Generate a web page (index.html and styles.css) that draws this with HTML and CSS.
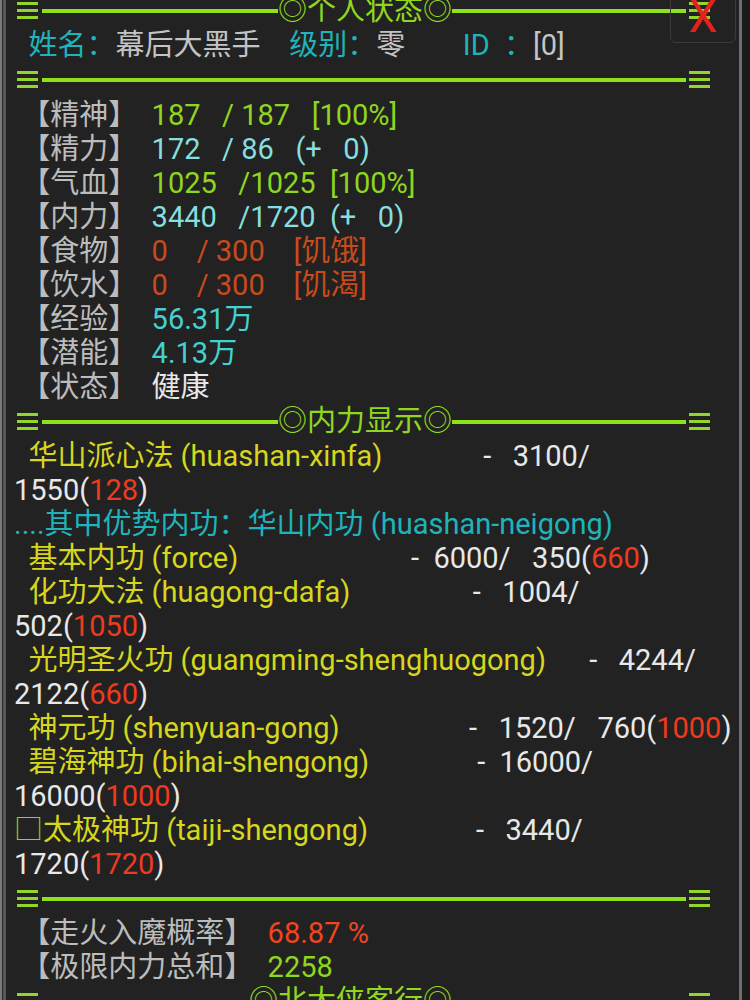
FILE: index.html
```html
<!DOCTYPE html>
<html lang="zh-CN">
<head>
<meta charset="utf-8">
<title>个人状态</title>
<link rel="stylesheet" href="styles.css">
</head>
<body>
<div class="screen">
  <div class="divider"><i class="tri"></i><span class="line"></span><span class="title">◎个人状态◎</span><span class="line r"></span><i class="tri"></i></div>
  <div class="row"><span class="t">  姓名：</span><span class="nm">幕后大黑手</span>    <span class="t">级别：</span><span class="nm">零</span>        <span class="t">ID  ：</span><span class="nm">[0]</span></div>
  <div class="divider"><i class="tri"></i><span class="line"></span><span class="line r"></span><i class="tri"></i></div>
  <div class="stats">
    <div class="row"><span class="lbl"> 【精神】</span>  <span class="g">187   / 187   [100%]</span></div>
    <div class="row"><span class="lbl"> 【精力】</span>  <span class="c">172   / 86   (+   0)</span></div>
    <div class="row"><span class="lbl"> 【气血】</span>  <span class="g">1025   /1025  [100%]</span></div>
    <div class="row"><span class="lbl"> 【内力】</span>  <span class="c">3440   /1720  (+   0)</span></div>
    <div class="row"><span class="lbl"> 【食物】</span>  <span class="o">0    / 300    [饥饿]</span></div>
    <div class="row"><span class="lbl"> 【饮水】</span>  <span class="o">0    / 300    [饥渴]</span></div>
    <div class="row"><span class="lbl"> 【经验】</span>  <span class="cy">56.31万</span></div>
    <div class="row"><span class="lbl"> 【潜能】</span>  <span class="cy">4.13万</span></div>
    <div class="row"><span class="lbl"> 【状态】</span>  <span class="w">健康</span></div>
  </div>
  <div class="divider"><i class="tri"></i><span class="line"></span><span class="title">◎内力显示◎</span><span class="line r"></span><i class="tri"></i></div>
  <div class="row"><span class="y">  华山派心法 (huashan-xinfa)</span>              <span class="w">-   3100/</span></div>
  <div class="row"><span class="w">1550(</span><span class="r">128</span><span class="w">)</span></div>
  <div class="row"><span class="t">....其中优势内功：华山内功 (huashan-neigong)</span></div>
  <div class="row"><span class="y">  基本内功 (force)</span>                        <span class="w">-  6000/   350(</span><span class="r">660</span><span class="w">)</span></div>
  <div class="row"><span class="y">  化功大法 (huagong-dafa)</span>                 <span class="w">-   1004/</span></div>
  <div class="row"><span class="w">502(</span><span class="r">1050</span><span class="w">)</span></div>
  <div class="row"><span class="y">  光明圣火功 (guangming-shenghuogong)</span>      <span class="w">-   4244/</span></div>
  <div class="row"><span class="w">2122(</span><span class="r">660</span><span class="w">)</span></div>
  <div class="row"><span class="y">  神元功 (shenyuan-gong)</span>                  <span class="w">-   1520/   760(</span><span class="r">1000</span><span class="w">)</span></div>
  <div class="row"><span class="y">  碧海神功 (bihai-shengong)</span>               <span class="w">-  16000/</span></div>
  <div class="row"><span class="w">16000(</span><span class="r">1000</span><span class="w">)</span></div>
  <div class="row"><span class="g">□</span><span class="y">太极神功 (taiji-shengong)</span>               <span class="w">-   3440/</span></div>
  <div class="row"><span class="w">1720(</span><span class="r">1720</span><span class="w">)</span></div>
  <div class="divider"><i class="tri"></i><span class="line full"></span><i class="tri"></i></div>
  <div class="row"><span class="lbl"> 【走火入魔概率】</span>  <span class="rr">68.87 %</span></div>
  <div class="row"><span class="lbl"> 【极限内力总和】</span>  <span class="g">2258</span></div>
  <div class="divider"><i class="tri"></i><span class="line"></span><span class="title">◎北大侠客行◎</span><span class="line r"></span><i class="tri"></i></div>
</div>
<div class="close"><span class="x">X</span></div>
</body>
</html>
```
FILE: styles.css
```css
html {
  background: linear-gradient(to right, #7a7a7a 0 2px, #2b2b2b 2px 3px, #575757 3px 6px, #222222 6px 739px, #6e6e6e 739px 742px, #1b1b1b 742px);
}
body {
  margin: 0;
  height: 1000px;
  overflow: hidden;
  position: relative;
}
.screen {
  margin-top: -7px;
  padding-left: 14px;
  font-family: Roboto, "Noto Sans CJK SC", sans-serif;
  font-size: 29px;
  line-height: 34px;
  color: #c0c0c0;
}
.row {
  height: 34px;
  white-space: pre;
}
.stats {
  padding-top: 1px;
}
.divider {
  display: flex;
  align-items: center;
  height: 35px;
  width: 693px;
  margin-left: 3px;
}
.tri {
  flex: none;
  width: 21px;
  height: 17px;
  background: linear-gradient(#93d62a 0 3px, transparent 3px 7px, #93d62a 7px 10px, transparent 10px 14px, #93d62a 14px 17px);
}
.line {
  flex: 1;
  height: 4px;
  margin-left: 4px;
  background: #8ee21c;
}
.line.r {
  flex: none;
  width: 234px;
  margin-left: 0;
  margin-right: 3px;
}
.line.full {
  margin-right: 3px;
}
.title {
  color: #8fd81e;
  line-height: 35px;
  white-space: pre;
}
.t { color: #1fb3bc; }
.nm { color: #c4c4c4; }
.lbl { color: #bcbcbc; }
.g { color: #8fd61e; }
.c { color: #86dede; }
.o { color: #c64b1d; }
.cy { color: #45d0d2; }
.w { color: #e8e8e8; }
.y { color: #d6d61e; }
.r { color: #ee3a1e; }
.rr { color: #f0461f; }
.close {
  position: absolute;
  top: -10px;
  right: 14px;
  width: 66px;
  height: 53px;
  box-sizing: border-box;
  border: 1px solid #3a3a3a;
  border-radius: 0 0 6px 6px;
  display: flex;
  justify-content: center;
  align-items: flex-start;
  padding-top: 2px;
}
.x {
  font-family: Roboto, sans-serif;
  font-size: 46px;
  line-height: 46px;
  color: #e3231b;
}
```
